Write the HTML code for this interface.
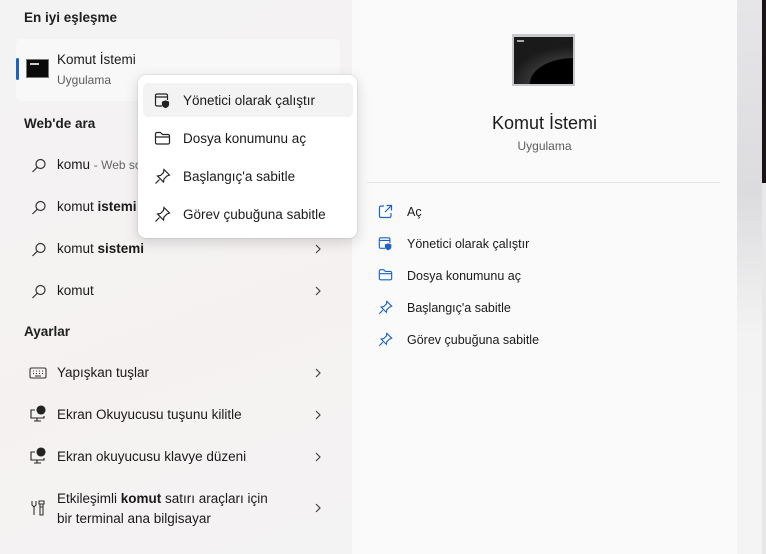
<!DOCTYPE html>
<html><head><meta charset="utf-8"><style>
*{margin:0;padding:0;box-sizing:border-box}
body{width:766px;height:554px;overflow:hidden;position:relative;font-family:"Liberation Sans",sans-serif;color:#1a1a1a;background:#f2f2f3}
.left{position:absolute;left:0;top:0;width:351px;height:554px;background:linear-gradient(160deg,#f3f3f3 0%,#f5f2f2 45%,#f6f1f1 60%,#f3f3f3 100%)}
.right{position:absolute;left:352px;top:0;width:385px;height:554px;background:#fafafa}
.strip{position:absolute;left:737px;top:0;width:25px;height:554px;background:linear-gradient(#e6e6e9,#dcdcdf 35%,#f3f3f3 60%,#f4f4f4)}
.edge{position:absolute;left:762px;top:0;width:4px;height:183px;background:#1a1416}
.edge2{position:absolute;left:762px;top:183px;width:4px;height:371px;background:#e8e8e8}
.t{position:absolute;white-space:nowrap;font-size:13.5px;line-height:16px}
.h{font-weight:bold;font-size:13.5px;color:#202020}
.s{font-size:12px;color:#5c5c5c}
.ic{position:absolute}
.chev{position:absolute;left:313px}
.menu{position:absolute;left:138px;top:75px;width:219px;height:163px;background:#fff;border-radius:8px;box-shadow:0 4px 14px rgba(0,0,0,.16),0 0 0 1px rgba(0,0,0,.05)}
.hl{position:absolute;left:5px;top:8px;width:210px;height:34px;background:#f3f3f3;border-radius:5px}
.ra{font-size:12.5px;color:#1a1a1a}
</style></head><body>
<div class="left"></div>
<div class="right"></div>
<div class="strip"></div><div class="edge"></div><div class="edge2"></div>

<div class="t h" style="left:24px;top:10px">En iyi eşleşme</div>
<div style="position:absolute;left:16px;top:39px;width:324px;height:62px;background:#f8f8f8;border-radius:5px"></div>
<div style="position:absolute;left:16px;top:58px;width:3px;height:22px;background:#1c62c4;border-radius:2px"></div>
<div style="position:absolute;left:26px;top:59px;width:23px;height:19px;background:#0a0a0a;border:1px solid #777"><div style="position:absolute;left:3px;top:3px;width:9px;height:2px;background:#ccc"></div></div>
<div class="t" style="left:57px;top:52px">Komut İstemi</div>
<div class="t s" style="left:57px;top:72px">Uygulama</div>

<div class="t h" style="left:24px;top:116px">Web'de ara</div>
<svg class="ic" style="left:30px;top:157px" width="18" height="18" viewBox="0 0 18 18" fill="none" stroke="#333" stroke-width="1.2"><circle cx="10.5" cy="7" r="4.5"/><path d="M7.3 10.2L2.5 15"/></svg>
<div class="t" style="left:57px;top:157px">komu <span style="font-size:12px;color:#666">- Web sonuçları</span></div>
<svg class="ic" style="left:30px;top:199px" width="18" height="18" viewBox="0 0 18 18" fill="none" stroke="#333" stroke-width="1.2"><circle cx="10.5" cy="7" r="4.5"/><path d="M7.3 10.2L2.5 15"/></svg>
<div class="t" style="left:57px;top:199px">komut <b>istemi</b></div>
<svg class="ic" style="left:30px;top:241px" width="18" height="18" viewBox="0 0 18 18" fill="none" stroke="#333" stroke-width="1.2"><circle cx="10.5" cy="7" r="4.5"/><path d="M7.3 10.2L2.5 15"/></svg>
<div class="t" style="left:57px;top:241px">komut <b>sistemi</b></div>
<svg class="chev" style="top:243px" width="10" height="12" viewBox="0 0 10 12" fill="none" stroke="#444" stroke-width="1.2"><path d="M3 2l4 4-4 4"/></svg>
<svg class="ic" style="left:30px;top:283px" width="18" height="18" viewBox="0 0 18 18" fill="none" stroke="#333" stroke-width="1.2"><circle cx="10.5" cy="7" r="4.5"/><path d="M7.3 10.2L2.5 15"/></svg>
<div class="t" style="left:57px;top:283px">komut</div>
<svg class="chev" style="top:285px" width="10" height="12" viewBox="0 0 10 12" fill="none" stroke="#444" stroke-width="1.2"><path d="M3 2l4 4-4 4"/></svg>

<div class="t h" style="left:24px;top:324px">Ayarlar</div>
<svg class="ic" style="left:29px;top:366px" width="18" height="14" viewBox="0 0 18 14" fill="none" stroke="#333" stroke-width="1.1"><rect x="1" y="2" width="16" height="10" rx="1.5"/><path d="M4 5h1M7 5h1M10 5h1M13 5h1M4 7.5h1M7 7.5h1M10 7.5h1M13 7.5h1M6 10h6"/></svg>
<div class="t" style="left:57px;top:365px">Yapışkan tuşlar</div>
<svg class="chev" style="top:367px" width="10" height="12" viewBox="0 0 10 12" fill="none" stroke="#444" stroke-width="1.2"><path d="M3 2l4 4-4 4"/></svg>
<svg class="ic" style="left:29px;top:405px" width="18" height="18" viewBox="0 0 18 18" fill="none" stroke="#222" stroke-width="1.1"><path d="M6 5H2v8h13v-2M8 13v3M5 16h7"/><circle cx="12" cy="5" r="4" fill="#222"/></svg>
<div class="t" style="left:57px;top:407px">Ekran Okuyucusu tuşunu kilitle</div>
<svg class="chev" style="top:409px" width="10" height="12" viewBox="0 0 10 12" fill="none" stroke="#444" stroke-width="1.2"><path d="M3 2l4 4-4 4"/></svg>
<svg class="ic" style="left:29px;top:447px" width="18" height="18" viewBox="0 0 18 18" fill="none" stroke="#222" stroke-width="1.1"><path d="M6 5H2v8h13v-2M8 13v3M5 16h7"/><circle cx="12" cy="5" r="4" fill="#222"/></svg>
<div class="t" style="left:57px;top:449px">Ekran okuyucusu klavye düzeni</div>
<svg class="chev" style="top:451px" width="10" height="12" viewBox="0 0 10 12" fill="none" stroke="#444" stroke-width="1.2"><path d="M3 2l4 4-4 4"/></svg>
<svg class="ic" style="left:30px;top:499px" width="16" height="18" viewBox="0 0 16 18" fill="none" stroke="#333" stroke-width="1.1"><path d="M2 2v4l2 2 2-2V2M4 8v8M9 2h5v3h-5zM10 5v3h3V5M10 8h3v8h-3z"/></svg>
<div class="t" style="left:57px;top:491px">Etkileşimli <b>komut</b> satırı araçları için</div>
<div class="t" style="left:57px;top:511px">bir terminal ana bilgisayar</div>
<svg class="chev" style="top:502px" width="10" height="12" viewBox="0 0 10 12" fill="none" stroke="#444" stroke-width="1.2"><path d="M3 2l4 4-4 4"/></svg>

<div class="menu">
<div class="hl"></div>
<svg class="ic" style="left:16px;top:17px" width="17" height="17" viewBox="0 0 17 17" fill="none" stroke="#222" stroke-width="1.2"><path d="M8 14H3a1.5 1.5 0 0 1-1.5-1.5v-9A1.5 1.5 0 0 1 3 2h9a1.5 1.5 0 0 1 1.5 1.5V8M1.5 5h12"/><path d="M11.5 9l3 1v2.5c0 1.5-1.5 2.5-3 3-1.5-.5-3-1.5-3-3V10z" fill="#222"/></svg>
<div class="t" style="left:45px;top:18px">Yönetici olarak çalıştır</div>
<svg class="ic" style="left:16px;top:56px" width="17" height="15" viewBox="0 0 17 15" fill="none" stroke="#222" stroke-width="1.2"><path d="M1.5 3a1.5 1.5 0 0 1 1.5-1.5h3.5l2 2H14a1.5 1.5 0 0 1 1.5 1.5v6.5A1.5 1.5 0 0 1 14 13H3a1.5 1.5 0 0 1-1.5-1.5zM1.5 6h14"/></svg>
<div class="t" style="left:45px;top:56px">Dosya konumunu aç</div>
<svg class="ic" style="left:16px;top:93px" width="17" height="17" viewBox="0 0 17 17" fill="none" stroke="#222" stroke-width="1.2"><path d="M10 1.5l5.5 5.5-2.5 1-3 3-.5 3-6-6 3-.5 3-3zM5.5 11.5L1.5 15.5"/></svg>
<div class="t" style="left:45px;top:94px">Başlangıç'a sabitle</div>
<svg class="ic" style="left:16px;top:131px" width="17" height="17" viewBox="0 0 17 17" fill="none" stroke="#222" stroke-width="1.2"><path d="M10 1.5l5.5 5.5-2.5 1-3 3-.5 3-6-6 3-.5 3-3zM5.5 11.5L1.5 15.5"/></svg>
<div class="t" style="left:45px;top:132px">Görev çubuğuna sabitle</div>
</div>

<div style="position:absolute;left:512px;top:34px;width:63px;height:52px;background:#c8c8cc;padding:3px 2px 2px 2px">
<div style="width:100%;height:100%;background:radial-gradient(ellipse 120% 90% at 100% 100%,#000 60%,#333 62%,#1a1a1a 90%);position:relative"><div style="position:absolute;left:3px;top:3px;width:7px;height:2px;background:#aaa"></div></div></div>
<div class="t" style="left:352px;width:385px;text-align:center;top:112px;font-size:18px;line-height:22px">Komut İstemi</div>
<div class="t s" style="left:352px;width:385px;text-align:center;top:138px">Uygulama</div>
<div style="position:absolute;left:367px;top:182px;width:353px;height:1px;background:#e4e4e4"></div>

<svg class="ic" style="left:378px;top:204px" width="15" height="15" viewBox="0 0 15 15" fill="none" stroke="#1d63c9" stroke-width="1.2"><path d="M6 2H3a1.5 1.5 0 0 0-1.5 1.5v8.5A1.5 1.5 0 0 0 3 13.5h8.5A1.5 1.5 0 0 0 13 12V9M8.5 1.5h5v5M13.5 1.5L7 8"/></svg>
<div class="t ra" style="left:407px;top:204px">Aç</div>
<svg class="ic" style="left:378px;top:236px" width="15" height="15" viewBox="0 0 17 17" fill="none" stroke="#1d63c9" stroke-width="1.3"><path d="M8 14H3a1.5 1.5 0 0 1-1.5-1.5v-9A1.5 1.5 0 0 1 3 2h9a1.5 1.5 0 0 1 1.5 1.5V8M1.5 5h12"/><path d="M11.5 9l3 1v2.5c0 1.5-1.5 2.5-3 3-1.5-.5-3-1.5-3-3V10z" fill="#1d63c9"/></svg>
<div class="t ra" style="left:407px;top:236px">Yönetici olarak çalıştır</div>
<svg class="ic" style="left:378px;top:268px" width="15" height="14" viewBox="0 0 17 15" fill="none" stroke="#1d63c9" stroke-width="1.3"><path d="M1.5 3a1.5 1.5 0 0 1 1.5-1.5h3.5l2 2H14a1.5 1.5 0 0 1 1.5 1.5v6.5A1.5 1.5 0 0 1 14 13H3a1.5 1.5 0 0 1-1.5-1.5zM1.5 6h14"/></svg>
<div class="t ra" style="left:407px;top:268px">Dosya konumunu aç</div>
<svg class="ic" style="left:378px;top:300px" width="15" height="15" viewBox="0 0 17 17" fill="none" stroke="#1d63c9" stroke-width="1.3"><path d="M10 1.5l5.5 5.5-2.5 1-3 3-.5 3-6-6 3-.5 3-3zM5.5 11.5L1.5 15.5"/></svg>
<div class="t ra" style="left:407px;top:300px">Başlangıç'a sabitle</div>
<svg class="ic" style="left:378px;top:332px" width="15" height="15" viewBox="0 0 17 17" fill="none" stroke="#1d63c9" stroke-width="1.3"><path d="M10 1.5l5.5 5.5-2.5 1-3 3-.5 3-6-6 3-.5 3-3zM5.5 11.5L1.5 15.5"/></svg>
<div class="t ra" style="left:407px;top:332px">Görev çubuğuna sabitle</div>
</body></html>
